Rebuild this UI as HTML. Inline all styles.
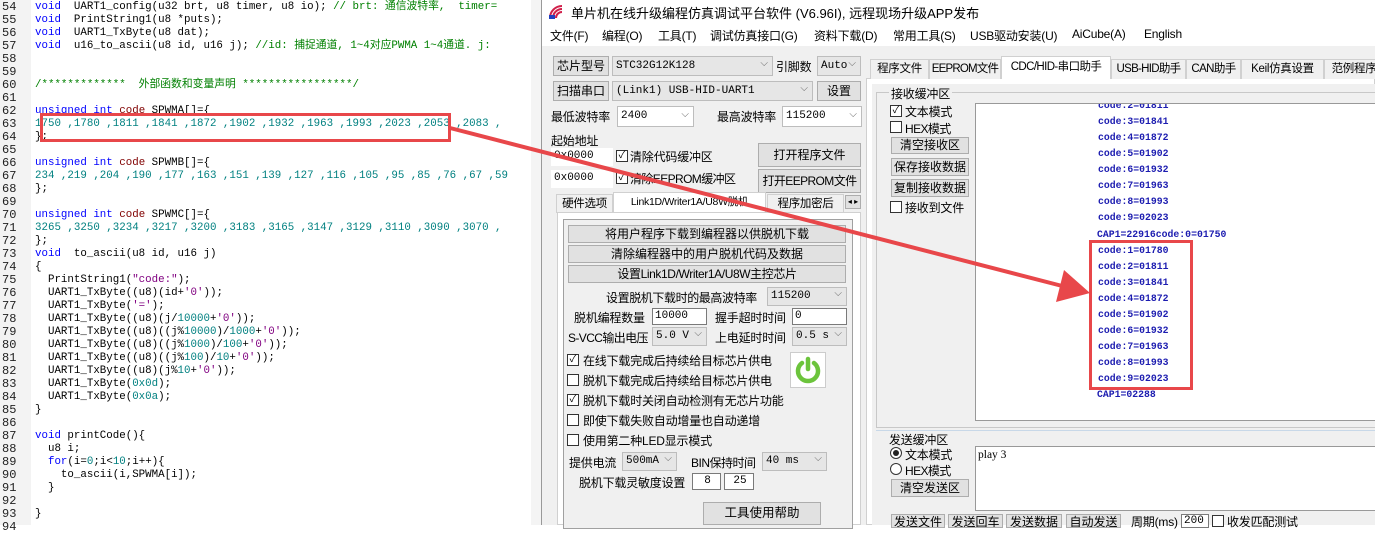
<!DOCTYPE html>
<html><head><meta charset="utf-8">
<style>
*{margin:0;padding:0;box-sizing:border-box}
body{width:1375px;height:525px;overflow:hidden;background:#fff;position:relative;font-family:"Liberation Sans","Noto Sans CJK SC",sans-serif;font-size:12px;color:#000}
.a{position:absolute;white-space:nowrap}
#code{position:absolute;left:0;top:0;width:541px;height:525px;background:#fff}
#gut{position:absolute;left:0;top:0;width:31px;height:525px;background:#f3f3f3}
.ln{position:absolute;left:2px;font-family:"Liberation Mono","Noto Sans CJK SC",monospace;font-size:12px;color:#222;line-height:13px;height:13px}
.cl{position:absolute;left:35px;font-family:"Liberation Mono","Noto Sans CJK SC",monospace;font-size:10.8px;line-height:13px;height:13px;white-space:pre;color:#000}
.k{color:#0000ff}.n{color:#008080}.c{color:#008000}.s{color:#800080}.r{color:#800000}
.win{position:absolute;left:541px;top:0;width:834px;height:525px;background:#f0f0f0;border-left:1px solid #999}
.btn{position:absolute;background:#e1e1e1;border:1px solid #adadad;text-align:center;font-size:12px;line-height:16px;white-space:nowrap;overflow:hidden}
.cmb{position:absolute;background:#e6e6e6;border:1px solid #bdbdbd;font-family:"Liberation Mono","Noto Sans CJK SC",monospace;font-size:11px;line-height:16px;padding-left:3px}
.cmb:after{content:"⌵";position:absolute;right:4px;top:-1px;color:#666;font-size:10px}
.inp{position:absolute;background:#fff;border:1px solid #7a7a7a;font-family:"Liberation Mono",monospace;font-size:11px;line-height:15px;padding-left:2px}
.cb{position:absolute;width:12px;height:12px;border:1px solid #333;background:#fff;font-size:10px;line-height:10px;text-align:center}
.tab{position:absolute;border:1px solid #d0d0d0;border-bottom:none;background:#f0f0f0;font-size:11.5px;line-height:19px;text-align:center;white-space:nowrap;overflow:hidden;letter-spacing:-0.3px}
.rx{position:absolute;left:1097px;font-family:"Liberation Mono",monospace;font-size:9.8px;font-weight:bold;color:#1c1cb0;line-height:16px}
.t{position:absolute;white-space:nowrap;font-size:12px;letter-spacing:-0.2px}
</style></head><body>
<div id="code"><div id="gut"></div>
<div style="position:absolute;left:531px;top:0;width:10px;height:525px;background:#f4f4f4"></div>
</div>
<div id="lines"></div>
<script>
var L=[
["54",'<span class="k">void</span>  UART1_config(u32 brt, u8 timer, u8 io); <span class="c">// brt: 通信波特率,  timer=</span>'],
["55",'<span class="k">void</span>  PrintString1(u8 *puts);'],
["56",'<span class="k">void</span>  UART1_TxByte(u8 dat);'],
["57",'<span class="k">void</span>  u16_to_ascii(u8 id, u16 j); <span class="c">//id: 捕捉通道, 1~4对应PWMA 1~4通道. j:</span>'],
["58",''],["59",''],
["60",'<span class="c">/*************  外部函数和变量声明 *****************/</span>'],
["61",''],
["62",'<span class="k">unsigned int</span> <span class="r">code</span> SPWMA[]={'],
["63",'<span class="n">1750 ,1780 ,1811 ,1841 ,1872 ,1902 ,1932 ,1963 ,1993 ,2023 ,2053 ,2083 ,</span>'],
["64",'};'],["65",''],
["66",'<span class="k">unsigned int</span> <span class="r">code</span> SPWMB[]={'],
["67",'<span class="n">234 ,219 ,204 ,190 ,177 ,163 ,151 ,139 ,127 ,116 ,105 ,95 ,85 ,76 ,67 ,59</span>'],
["68",'};'],["69",''],
["70",'<span class="k">unsigned int</span> <span class="r">code</span> SPWMC[]={'],
["71",'<span class="n">3265 ,3250 ,3234 ,3217 ,3200 ,3183 ,3165 ,3147 ,3129 ,3110 ,3090 ,3070 ,</span>'],
["72",'};'],
["73",'<span class="k">void</span>  to_ascii(u8 id, u16 j)'],
["74",'{'],
["75",'  PrintString1(<span class="s">"code:"</span>);'],
["76",'  UART1_TxByte((u8)(id+<span class="s">\'0\'</span>));'],
["77",'  UART1_TxByte(<span class="s">\'=\'</span>);'],
["78",'  UART1_TxByte((u8)(j/<span class="n">10000</span>+<span class="s">\'0\'</span>));'],
["79",'  UART1_TxByte((u8)((j%<span class="n">10000</span>)/<span class="n">1000</span>+<span class="s">\'0\'</span>));'],
["80",'  UART1_TxByte((u8)((j%<span class="n">1000</span>)/<span class="n">100</span>+<span class="s">\'0\'</span>));'],
["81",'  UART1_TxByte((u8)((j%<span class="n">100</span>)/<span class="n">10</span>+<span class="s">\'0\'</span>));'],
["82",'  UART1_TxByte((u8)(j%<span class="n">10</span>+<span class="s">\'0\'</span>));'],
["83",'  UART1_TxByte(<span class="n">0x0d</span>);'],
["84",'  UART1_TxByte(<span class="n">0x0a</span>);'],
["85",'}'],["86",''],
["87",'<span class="k">void</span> printCode(){'],
["88",'  u8 i;'],
["89",'  <span class="k">for</span>(i=<span class="n">0</span>;i&lt;<span class="n">10</span>;i++){'],
["90",'    to_ascii(i,SPWMA[i]);'],
["91",'  }'],["92",''],["93",'}'],["94",'']];
var h='';for(var i=0;i<L.length;i++){var t=1+i*13;h+='<div class="ln" style="top:'+t+'px">'+L[i][0]+'</div><div class="cl" style="top:'+t+'px">'+L[i][1]+'</div>';}
document.getElementById('lines').innerHTML=h;
</script>
<div style="position:absolute;left:40px;top:113px;width:411px;height:29px;border:3px solid #e8474a"></div>

<div class="win">
<div style="position:absolute;left:0;top:0;width:834px;height:23px;background:#fff"></div>
<svg class="a" style="left:6px;top:4px" width="18" height="16" viewBox="0 0 18 16"><path d="M2 14 A12 12 0 0 1 14 2 M5 14 A9 9 0 0 1 14 5 M8 14 A6 6 0 0 1 14 8" stroke="#d0204a" stroke-width="2" fill="none"/><rect x="1" y="11" width="6" height="4" fill="#2040c0"/></svg>
<div class="a" style="left:29px;top:3px;font-size:13px">单片机在线升级编程仿真调试平台软件 (V6.96I), 远程现场升级APP发布</div>
<div style="position:absolute;left:0;top:23px;width:834px;height:23px;background:#fff"></div>
<div class="t" style="left:8px;top:27px">文件(F)</div>
<div class="t" style="left:60px;top:27px">编程(O)</div>
<div class="t" style="left:116px;top:27px">工具(T)</div>
<div class="t" style="left:168px;top:27px">调试仿真接口(G)</div>
<div class="t" style="left:272px;top:27px">资料下载(D)</div>
<div class="t" style="left:351px;top:27px">常用工具(S)</div>
<div class="t" style="left:428px;top:27px">USB驱动安装(U)</div>
<div class="t" style="left:530px;top:27px">AiCube(A)</div>
<div class="t" style="left:602px;top:27px">English</div>
</div>

<!-- left panel -->
<div class="btn" style="left:553px;top:56px;width:56px;height:20px;line-height:18px">芯片型号</div>
<div class="cmb" style="left:612px;top:56px;width:161px;height:20px;line-height:18px">STC32G12K128</div>
<div class="t" style="left:776px;top:58px">引脚数</div>
<div class="cmb" style="left:817px;top:56px;width:44px;height:20px;line-height:18px">Auto</div>
<div class="btn" style="left:553px;top:81px;width:56px;height:20px;line-height:18px">扫描串口</div>
<div class="cmb" style="left:612px;top:81px;width:201px;height:20px;line-height:18px">(Link1) USB-HID-UART1</div>
<div class="btn" style="left:817px;top:81px;width:44px;height:20px;line-height:18px">设置</div>
<div class="t" style="left:551px;top:108px">最低波特率</div>
<div class="cmb" style="left:617px;top:106px;width:77px;height:21px;line-height:19px;background:#fff">2400</div>
<div class="t" style="left:717px;top:108px">最高波特率</div>
<div class="cmb" style="left:782px;top:106px;width:80px;height:21px;line-height:19px;background:#fff">115200</div>
<div class="t" style="left:551px;top:132px">起始地址</div>
<div class="inp" style="left:551px;top:148px;width:62px;height:18px;border-color:#fff">0x0000</div>
<div class="cb" style="left:616px;top:150px">✓</div><div class="t" style="left:630px;top:148px">清除代码缓冲区</div>
<div class="btn" style="left:758px;top:143px;width:103px;height:24px;line-height:22px">打开程序文件</div>
<div class="inp" style="left:551px;top:170px;width:62px;height:18px;border-color:#fff">0x0000</div>
<div class="cb" style="left:616px;top:172px">✓</div><div class="t" style="left:630px;top:170px;letter-spacing:-0.6px">清除EEPROM缓冲区</div>
<div class="btn" style="left:758px;top:169px;width:103px;height:24px;line-height:22px;letter-spacing:-0.6px">打开EEPROM文件</div>
<div class="tab" style="left:556px;top:194px;width:57px;height:19px">硬件选项</div>
<div class="tab" style="left:613px;top:192px;width:153px;height:21px;background:#fff;font-size:10.5px">Link1D/Writer1A/U8W脱机</div>
<div class="tab" style="left:767px;top:194px;width:77px;height:19px">程序加密后</div>
<div class="btn" style="left:845px;top:195px;width:16px;height:14px;font-size:8px;line-height:12px">◂ ▸</div>
<div style="position:absolute;left:557px;top:212px;width:304px;height:313px;background:#fff;border:1px solid #d0d0d0"></div>
<div style="position:absolute;left:563px;top:219px;width:290px;height:310px;border:1px solid #a0a0a0;background:#f0f0f0"></div>
<div class="btn" style="left:568px;top:225px;width:278px;height:18px">将用户程序下载到编程器以供脱机下载</div>
<div class="btn" style="left:568px;top:245px;width:278px;height:18px">清除编程器中的用户脱机代码及数据</div>
<div class="btn" style="left:568px;top:265px;width:278px;height:18px;letter-spacing:-0.4px">设置Link1D/Writer1A/U8W主控芯片</div>
<div class="t" style="left:606px;top:289px;letter-spacing:-0.4px">设置脱机下载时的最高波特率</div>
<div class="cmb" style="left:767px;top:287px;width:80px;height:19px">115200</div>
<div class="t" style="left:574px;top:309px">脱机编程数量</div>
<div class="inp" style="left:652px;top:308px;width:55px;height:17px">10000</div>
<div class="t" style="left:715px;top:309px">握手超时时间</div>
<div class="inp" style="left:792px;top:308px;width:55px;height:17px">0</div>
<div class="t" style="left:568px;top:329px;letter-spacing:-0.6px">S-VCC输出电压</div>
<div class="cmb" style="left:652px;top:327px;width:55px;height:19px">5.0 V</div>
<div class="t" style="left:715px;top:329px">上电延时时间</div>
<div class="cmb" style="left:792px;top:327px;width:55px;height:19px">0.5 s</div>
<div class="cb" style="left:567px;top:354px">✓</div><div class="t" style="left:583px;top:352px">在线下载完成后持续给目标芯片供电</div>
<div class="cb" style="left:567px;top:374px"></div><div class="t" style="left:583px;top:372px">脱机下载完成后持续给目标芯片供电</div>
<div class="cb" style="left:567px;top:394px">✓</div><div class="t" style="left:583px;top:392px">脱机下载时关闭自动检测有无芯片功能</div>
<div class="cb" style="left:567px;top:414px"></div><div class="t" style="left:583px;top:412px">即使下载失败自动增量也自动递增</div>
<div class="cb" style="left:567px;top:434px"></div><div class="t" style="left:583px;top:432px">使用第二种LED显示模式</div>
<div style="position:absolute;left:790px;top:352px;width:36px;height:36px;background:#fff;border:1px solid #ccc"></div>
<svg class="a" style="left:792px;top:354px" width="32" height="32" viewBox="0 0 32 32"><path d="M10 9 A10 10 0 1 0 22 9" stroke="#6cc43c" stroke-width="4.5" fill="none" stroke-linecap="round"/><line x1="16" y1="5" x2="16" y2="15" stroke="#6cc43c" stroke-width="4.5" stroke-linecap="round"/></svg>
<div class="t" style="left:569px;top:454px">提供电流</div>
<div class="cmb" style="left:622px;top:452px;width:55px;height:19px">500mA</div>
<div class="t" style="left:691px;top:454px;letter-spacing:-0.5px">BIN保持时间</div>
<div class="cmb" style="left:762px;top:452px;width:65px;height:19px">40 ms</div>
<div class="t" style="left:579px;top:474px">脱机下载灵敏度设置</div>
<div class="inp" style="left:692px;top:473px;width:29px;height:17px;text-align:center">8</div>
<div class="inp" style="left:724px;top:473px;width:30px;height:17px;text-align:center">25</div>
<div class="btn" style="left:703px;top:502px;width:118px;height:23px;line-height:21px;font-size:12.5px">工具使用帮助</div>

<!-- right tabs -->
<div style="position:absolute;left:866px;top:78px;width:509px;height:447px;background:#fff;border:1px solid #d0d0d0"></div>
<div class="tab" style="left:870px;top:59px;width:59px;height:20px">程序文件</div>
<div class="tab" style="left:929px;top:59px;width:72px;height:20px;letter-spacing:-0.8px">EEPROM文件</div>
<div class="tab" style="left:1001px;top:56px;width:110px;height:23px;background:#fff;line-height:21px;letter-spacing:-0.6px">CDC/HID-串口助手</div>
<div class="tab" style="left:1111px;top:59px;width:75px;height:20px;letter-spacing:-0.7px">USB-HID助手</div>
<div class="tab" style="left:1186px;top:59px;width:55px;height:20px;letter-spacing:-0.6px">CAN助手</div>
<div class="tab" style="left:1241px;top:59px;width:83px;height:20px">Keil仿真设置</div>
<div class="tab" style="left:1324px;top:59px;width:60px;height:20px">范例程序</div>
<div style="position:absolute;left:872px;top:84px;width:503px;height:441px;background:#f0f0f0"></div>
<div style="position:absolute;left:876px;top:92px;width:499px;height:336px;border:1px solid #c8c8c8;border-right:none"></div>
<div class="t" style="left:889px;top:85px;background:#f0f0f0;padding:0 2px">接收缓冲区</div>
<div class="cb" style="left:890px;top:105px">✓</div><div class="t" style="left:905px;top:103px">文本模式</div>
<div class="cb" style="left:890px;top:121px"></div><div class="t" style="left:905px;top:120px;letter-spacing:-0.6px">HEX模式</div>
<div class="btn" style="left:891px;top:137px;width:78px;height:17px;line-height:15px">清空接收区</div>
<div class="btn" style="left:891px;top:158px;width:78px;height:18px">保存接收数据</div>
<div class="btn" style="left:891px;top:179px;width:78px;height:18px">复制接收数据</div>
<div class="cb" style="left:890px;top:201px"></div><div class="t" style="left:905px;top:199px">接收到文件</div>
<div style="position:absolute;left:975px;top:103px;width:400px;height:318px;background:#fff;border:1px solid #999;border-right:none;overflow:hidden">
<div class="rx" style="left:122px;top:-6px">code:2=01811</div>
<div class="rx" style="left:122px;top:10px">code:3=01841</div>
<div class="rx" style="left:122px;top:26px">code:4=01872</div>
<div class="rx" style="left:122px;top:42px">code:5=01902</div>
<div class="rx" style="left:122px;top:58px">code:6=01932</div>
<div class="rx" style="left:122px;top:74px">code:7=01963</div>
<div class="rx" style="left:122px;top:90px">code:8=01993</div>
<div class="rx" style="left:122px;top:106px">code:9=02023</div>
<div class="rx" style="left:121px;top:123px">CAP1=22916code:0=01750</div>
<div class="rx" style="left:122px;top:139px">code:1=01780</div>
<div class="rx" style="left:122px;top:155px">code:2=01811</div>
<div class="rx" style="left:122px;top:171px">code:3=01841</div>
<div class="rx" style="left:122px;top:187px">code:4=01872</div>
<div class="rx" style="left:122px;top:203px">code:5=01902</div>
<div class="rx" style="left:122px;top:219px">code:6=01932</div>
<div class="rx" style="left:122px;top:235px">code:7=01963</div>
<div class="rx" style="left:122px;top:251px">code:8=01993</div>
<div class="rx" style="left:122px;top:267px">code:9=02023</div>
<div class="rx" style="left:121px;top:283px">CAP1=02288</div>
</div>
<div style="position:absolute;left:1089px;top:240px;width:104px;height:150px;border:3px solid #e8474a"></div>
<div style="position:absolute;left:876px;top:430px;width:499px;height:1px;background:#c8d8e8"></div>
<div class="t" style="left:889px;top:431px">发送缓冲区</div>
<div class="a" style="left:890px;top:447px;width:12px;height:12px;border:1px solid #333;border-radius:50%;background:#fff"><div style="margin:2px;width:6px;height:6px;border-radius:50%;background:#222"></div></div>
<div class="t" style="left:905px;top:446px">文本模式</div>
<div class="a" style="left:890px;top:463px;width:12px;height:12px;border:1px solid #333;border-radius:50%;background:#fff"></div>
<div class="t" style="left:905px;top:462px;letter-spacing:-0.6px">HEX模式</div>
<div class="btn" style="left:891px;top:479px;width:78px;height:18px">清空发送区</div>
<div style="position:absolute;left:975px;top:446px;width:400px;height:65px;background:#fff;border:1px solid #999;border-right:none"></div>
<div class="a" style="left:978px;top:449px;font-family:'Liberation Serif',serif;font-size:11.5px">play 3</div>
<div class="btn" style="left:891px;top:514px;width:54px;height:14px;line-height:14px">发送文件</div>
<div class="btn" style="left:948px;top:514px;width:55px;height:14px;line-height:14px">发送回车</div>
<div class="btn" style="left:1006px;top:514px;width:56px;height:14px;line-height:14px">发送数据</div>
<div class="btn" style="left:1066px;top:514px;width:55px;height:14px;line-height:14px">自动发送</div>
<div class="t" style="left:1131px;top:513px">周期(ms)</div>
<div class="inp" style="left:1181px;top:514px;width:28px;height:14px;line-height:12px">200</div>
<div class="cb" style="left:1212px;top:515px"></div><div class="t" style="left:1227px;top:513px">收发匹配测试</div>

<!-- arrow -->
<svg class="a" style="left:0;top:0" width="1375" height="525"><line x1="450" y1="128" x2="1070" y2="288" stroke="#e8474a" stroke-width="4"/><polygon points="1090,293 1064,270 1056,302" fill="#e8474a"/></svg>
</body></html>
